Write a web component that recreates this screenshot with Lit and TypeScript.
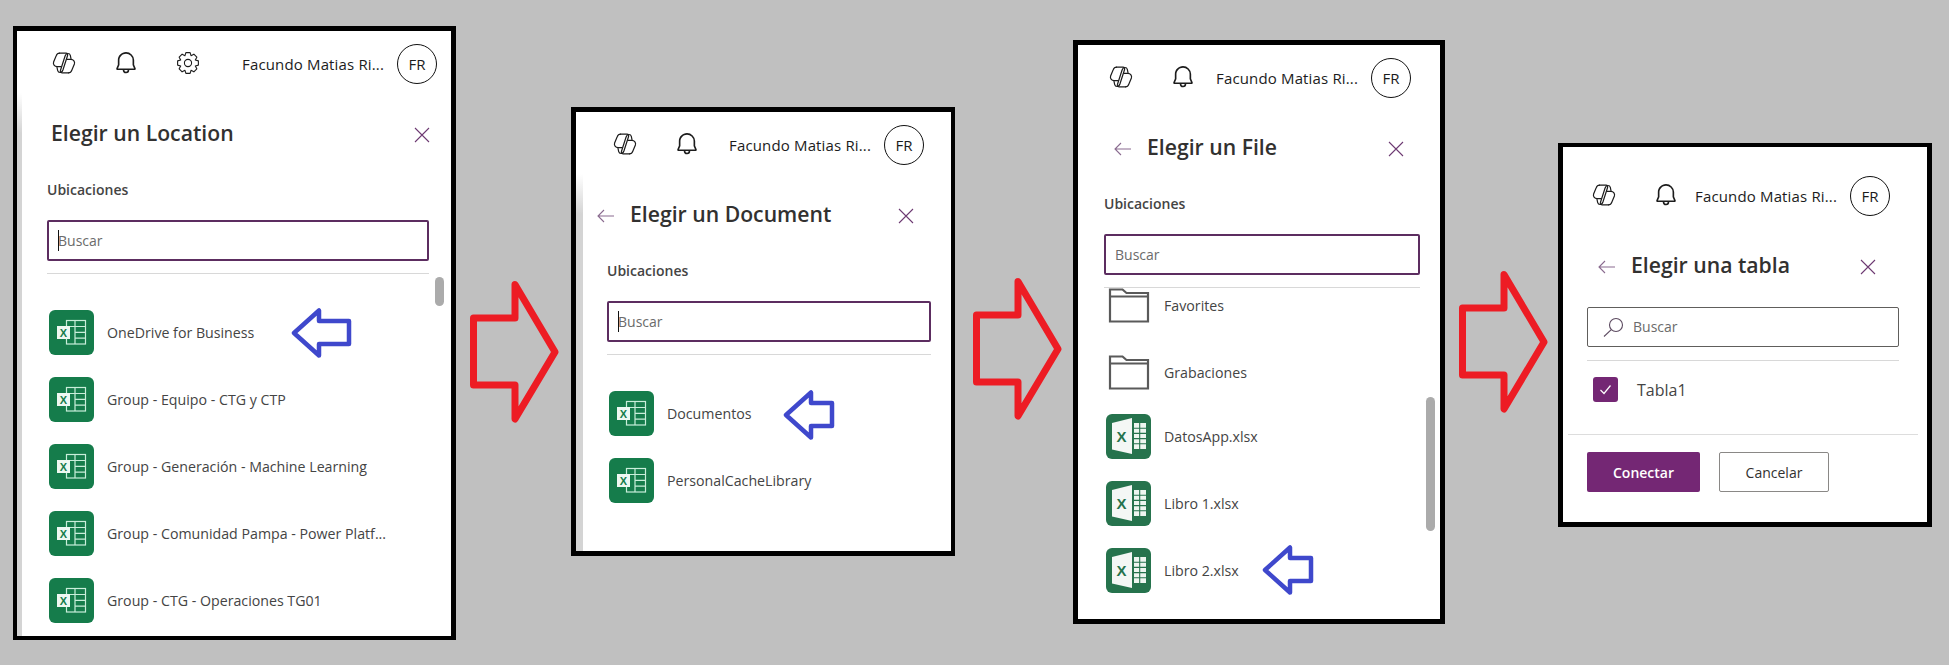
import { LitElement, css, html, svg } from 'lit';
import { customElement } from 'lit/decorators.js';

type RowKind = 'site' | 'folder' | 'book';

interface Row {
  label: string;
  kind: RowKind;
  // left offset of the blue marker arrow, measured from the row start
  mark?: number;
  markTop?: number;
}

const NAME = 'Facundo Matias Ri...';

const siteIcon = html`<svg class="file" width="45" height="45" viewBox="0 0 45 45">
  <rect width="45" height="45" rx="6" fill="#157c4b" />
  <g fill="none" stroke="#c9eeda" stroke-width="1.2">
    <rect x="17.5" y="10.5" width="19" height="23.5" />
    <path d="M26 10.5V34M17.5 16.5h19M26 22.3h10.5M26 28.2h10.5" />
  </g>
  <rect x="8" y="16" width="13" height="13" fill="#eef8f2" />
  <text x="14.5" y="26.5" class="x-a" text-anchor="middle">X</text>
</svg>`;

const bookIcon = html`<svg class="file" width="45" height="45" viewBox="0 0 45 45">
  <rect width="45" height="45" rx="6" fill="#26734d" />
  <path d="M6 9 26 4V40L6 35.500Z" fill="#f4f7f5" />
  <text x="15.500" y="28" class="x-b" text-anchor="middle">X</text>
  <rect x="28" y="9" width="12" height="26" fill="#eef5f0" />
  <path d="M33.700 9V35M28 14.200h12M28 19.400h12M28 24.600h12M28 29.800h12" stroke="#26734d" stroke-width="1.1" fill="none" />
</svg>`;

const folderIcon = html`<svg class="file" width="45" height="45" viewBox="0 0 45 45">
  <path d="M4 6.500H16.500L20.500 10H42V38.500H4Z M4 13.500H42" fill="none" stroke="#5a5a5a" stroke-width="2.200" />
</svg>`;

const icons = { site: siteIcon, folder: folderIcon, book: bookIcon };

const copilot = svg`<g fill="none" stroke="#1c1c1c" stroke-width="1.200" stroke-linejoin="round" stroke-linecap="round">
  <path d="M7.500 2.200H14c1.500 0 2 1.100 1.500 2.500L11 18.700c-.6 1.700-1.400 2.800-3 2.800-1.200 0-2-.7-2.300-1.900L5 16.300" />
  <path d="M7.500 2.200C5.800 2.200 4.800 3.100 4.200 4.800L1.600 11c-.7 2.200.8 4.700 3.500 4.700H9" />
  <path d="M16.500 21.800H10c-1.500 0-2-1.100-1.500-2.500L13 5.300c.6-1.700 1.400-2.800 3-2.800 1.200 0 2 .7 2.300 1.900l.7 3.300" />
  <path d="M16.500 21.800c1.700 0 2.700-.9 3.300-2.600L22.400 13c.7-2.200-.8-4.700-3.500-4.700H15" />
</g>`;

const bell = svg`<path fill="#1c1c1c" d="M12 1.996a7.49 7.49 0 0 1 7.496 7.25l.004.25v4.097l1.38 3.156a1.25 1.25 0 0 1-1.145 1.75L15 18.502a3 3 0 0 1-5.995.177L9 18.499H4.275a1.251 1.251 0 0 1-1.147-1.747L4.5 13.594V9.496c0-4.155 3.352-7.5 7.5-7.5ZM13.500 18.500l-3 .002a1.500 1.500 0 0 0 2.993.145l.007-.147ZM12 3.496c-3.320 0-6 2.674-6 6v4.410L4.656 17h14.697L18 13.907V9.509l-.004-.225A5.988 5.988 0 0 0 12 3.496Z" />`;

// eight-toothed gear outline, as in the reference
const gearPath = () => {
  const pts: string[] = [];
  for (let i = 0; i < 8; i++) {
    const a = (i * Math.PI) / 4;
    for (const [da, r] of [
      [-0.2, 10.6],
      [0.2, 10.6],
      [Math.PI / 8, 7.9],
    ]) {
      pts.push(`${(12 + r * Math.sin(a + da)).toFixed(2)} ${(12 - r * Math.cos(a + da)).toFixed(2)}`);
    }
  }
  return `M${pts.join('L')}Z`;
};

const gear = svg`<g fill="none" stroke="#1c1c1c" stroke-width="1.100" stroke-linejoin="round">
  <path d=${gearPath()} />
  <circle cx="12" cy="12" r="3.600" />
</g>`;

const closeIcon = html`<svg class="close" width="16" height="16" viewBox="0 0 16 16">
  <path d="M1 1 15 15M15 1 1 15" stroke="#6d3a72" stroke-width="1.100" fill="none" />
</svg>`;

const backIcon = html`<svg class="back" width="17" height="14" viewBox="0 0 17 14">
  <path d="M17 7H1M7 1 1 7 7 13" stroke="#8a6b8f" stroke-width="1.100" fill="none" />
</svg>`;

const redArrow = (cls: string) => html`<svg class="red ${cls}" width="89" height="142" viewBox="0 0 89 142">
  <path d="M3.500 37H45V3.500L85 71 45 138V104H3.500Z" fill="none" stroke="#ed1c24" stroke-width="7" stroke-linejoin="round" />
</svg>`;

const blueArrow = (left: number, top: number, wide: boolean) => {
  const tail = wide ? 58 : 49;
  return html`<svg class="blue" style="left:${left}px;top:${top}px" width="${tail + 3}" height="50" viewBox="0 0 ${tail + 3} 50">
    <path d="M3 25 28 2.500V13H${tail}V36H28V47.500Z" fill="none" stroke="#3f48cc" stroke-width="4.500" stroke-linejoin="round" />
  </svg>`;
};

@customElement('app-root')
export class AppRoot extends LitElement {
  static styles = css`
    :host {
      display: block;
      font-family: 'Open Sans', 'Noto Sans', sans-serif;
    }

    .page {
      display: flex;
      align-items: flex-start;
      height: 665px;
      padding-left: 13px;
      background: #c0c0c0;
      overflow: hidden;
    }

    .panel {
      position: relative;
      flex: none;
      display: flex;
      flex-direction: column;
      box-sizing: border-box;
      background: #fff;
      border: 5px solid #000;
      overflow: hidden;
    }

    .p1 {
      width: 443px;
      height: 614px;
      margin-top: 26px;
      border-width: 5px 5px 4px 4px;
      --head-left: 35px;
      --head-right: 14px;
      --head-top: 13px;
      --title-left: 34px;
      --title-right: 21px;
      --body-left: 30px;
      --body-right: 22px;
    }

    .p2 {
      width: 384px;
      height: 449px;
      margin-top: 107px;
      border-right-width: 4px;
      --head-left: 37px;
      --head-right: 27px;
      --head-top: 13px;
      --title-left: 21px;
      --title-right: 37px;
      --body-left: 31px;
      --body-right: 20px;
    }

    .p3 {
      width: 372px;
      height: 584px;
      margin-top: 40px;
      --head-left: 31px;
      --head-right: 29px;
      --head-top: 13px;
      --title-left: 36px;
      --title-right: 36px;
      --body-left: 26px;
      --body-right: 20px;
    }

    .p4 {
      width: 374px;
      height: 384px;
      margin-top: 143px;
      border-top-width: 4px;
      --head-left: 29px;
      --head-right: 37px;
      --head-top: 29px;
      --title-left: 35px;
      --title-right: 51px;
      --body-left: 24px;
      --body-right: 28px;
    }

    .red {
      flex: none;
    }

    .a1 {
      margin: 281px 12px 0 14px;
    }

    .a2 {
      margin: 278px 11px 0 18px;
    }

    .a3 {
      margin: 271px 10px 0 14px;
    }

    .strip {
      position: absolute;
      top: 62px;
      bottom: 0;
      left: 0;
      width: 5px;
      background: linear-gradient(to bottom, #fff, #d4d4d4 40px);
    }

    .p2 .strip {
      width: 7px;
    }

    .head {
      display: flex;
      align-items: center;
      justify-content: space-between;
      flex: none;
      height: 40px;
      margin-top: var(--head-top);
      padding: 0 var(--head-right) 0 var(--head-left);
    }

    .tools {
      display: flex;
      align-items: center;
      gap: 38px;
      margin-top: -2px;
    }

    .tools svg {
      flex: none;
      display: block;
    }

    .who {
      display: flex;
      align-items: center;
      gap: 13px;
    }

    .name {
      font-size: 15px;
      letter-spacing: 0.15px;
      color: #1c1c1c;
      white-space: nowrap;
    }

    .avatar {
      flex: none;
      box-sizing: border-box;
      display: flex;
      align-items: center;
      justify-content: center;
      width: 40px;
      height: 40px;
      border: 1px solid #111;
      border-radius: 50%;
      font-size: 15px;
      color: #1c1c1c;
    }

    .title-row {
      display: flex;
      align-items: center;
      flex: none;
      gap: 16px;
      height: 32px;
      margin-top: 34px;
      padding: 0 var(--title-right) 0 var(--title-left);
    }

    .title {
      margin: 0;
      padding-bottom: 3px;
      font-size: 21.2px;
      font-weight: 600;
      color: #323130;
      white-space: nowrap;
    }

    .close {
      margin-left: auto;
      margin-top: 1px;
      flex: none;
    }

    .back {
      flex: none;
      margin-top: 1px;
    }

    .body {
      display: flex;
      flex-direction: column;
      flex: none;
      padding: 0 var(--body-right) 0 var(--body-left);
    }

    .label {
      margin-top: 30px;
      height: 20px;
      line-height: 20px;
      font-size: 14px;
      font-weight: 600;
      color: #444;
    }

    .search {
      position: relative;
      display: flex;
      align-items: center;
      box-sizing: border-box;
      height: 41px;
      margin-top: 20px;
      padding: 0 0 1px 9px;
      border: 2px solid #5c2d60;
      border-radius: 2px;
      font-size: 14px;
      color: #6b6b6b;
    }

    .caret {
      position: absolute;
      left: 9px;
      top: 8px;
      width: 1px;
      height: 21px;
      background: #111;
    }

    .rule {
      height: 1px;
      margin-top: 12px;
      background: #d8d8d8;
    }

    .list {
      display: flex;
      flex-direction: column;
      gap: 22px;
      padding: 36px 0 0 2px;
    }

    .list.scrolled {
      padding-top: 0;
      margin-top: -5px;
    }

    .row {
      position: relative;
      display: flex;
      align-items: center;
      gap: 13px;
      height: 45px;
      font-size: 14.2px;
      color: #444;
      white-space: nowrap;
    }

    .row span {
      padding-bottom: 1px;
    }

    .folder + .book {
      margin-top: -3px;
    }

    .file {
      flex: none;
    }

    .x-a {
      font: 700 11px 'Liberation Sans', sans-serif;
      fill: #157c4b;
    }

    .x-b {
      font: 700 15px 'Liberation Sans', sans-serif;
      fill: #26734d;
    }

    .blue {
      position: absolute;
    }

    .thumb {
      position: absolute;
      width: 9px;
      border-radius: 5px;
      background: #ababab;
    }

    .p1 .thumb {
      left: 418px;
      top: 246px;
      height: 29px;
    }

    .p3 .thumb {
      left: 348px;
      top: 352px;
      height: 134px;
    }

    .p4 .search {
      height: 40px;
      margin-top: 25px;
      padding-left: 15px;
      gap: 9px;
      border: 1px solid #605e5c;
    }

    .p4 .rule {
      margin-top: 13px;
    }

    .check-row {
      display: flex;
      align-items: center;
      gap: 19px;
      margin: 16px 0 32px 6px;
      font-size: 16px;
      color: #444;
    }

    .check {
      display: flex;
      align-items: center;
      justify-content: center;
      width: 25px;
      height: 25px;
      border-radius: 3px;
      background: #742774;
    }

    .foot {
      display: flex;
      gap: 19px;
      margin: 0 9px 0 5px;
      padding: 17px 19px 0;
      border-top: 1px solid #ddd;
    }

    .btn {
      box-sizing: border-box;
      display: flex;
      align-items: center;
      justify-content: center;
      height: 40px;
      border-radius: 2px;
      font-size: 14px;
      font-weight: 600;
    }

    .primary {
      width: 113px;
      background: #742774;
      color: #fff;
    }

    .secondary {
      width: 110px;
      border: 1px solid #8a8886;
      background: #fff;
      color: #323130;
      font-weight: 500;
    }
  `;

  private renderHead(gearToo = false) {
    return html`<div class="head">
      <div class="tools">
        <svg width="24" height="24" viewBox="0 0 24 24">${copilot}</svg>
        <svg width="24" height="24" viewBox="1 1 22 22">${bell}</svg>
        ${gearToo ? html`<svg width="24" height="24" viewBox="0 0 24 24">${gear}</svg>` : ''}
      </div>
      <div class="who">
        <span class="name">${NAME}</span>
        <div class="avatar">FR</div>
      </div>
    </div>`;
  }

  private renderTitle(title: string, hasBack = true) {
    return html`<div class="title-row">
      ${hasBack ? backIcon : ''}
      <h2 class="title">${title}</h2>
      ${closeIcon}
    </div>`;
  }

  private renderSearch(caret: boolean) {
    return html`<div class="label">Ubicaciones</div>
      <div class="search">${caret ? html`<span class="caret"></span>` : ''}Buscar</div>
      <div class="rule"></div>`;
  }

  private renderRows(rows: Row[], scrolled = false, wideMark = false) {
    return html`<div class="list ${scrolled ? 'scrolled' : ''}">
      ${rows.map(
        (r) => html`<div class="row ${r.kind}">
          ${icons[r.kind]}<span>${r.label}</span>
          ${r.mark !== undefined ? blueArrow(r.mark, r.markTop ?? 0, wideMark) : ''}
        </div>`,
      )}
    </div>`;
  }

  render() {
    const locations: Row[] = [
      { label: 'OneDrive for Business', kind: 'site', mark: 242, markTop: -2 },
      { label: 'Group - Equipo - CTG y CTP', kind: 'site' },
      { label: 'Group - Generación - Machine Learning', kind: 'site' },
      { label: 'Group - Comunidad Pampa - Power Platf...', kind: 'site' },
      { label: 'Group - CTG - Operaciones TG01', kind: 'site' },
    ];
    const documents: Row[] = [
      { label: 'Documentos', kind: 'site', mark: 174, markTop: -1 },
      { label: 'PersonalCacheLibrary', kind: 'site' },
    ];
    const files: Row[] = [
      { label: 'Favorites', kind: 'folder' },
      { label: 'Grabaciones', kind: 'folder' },
      { label: 'DatosApp.xlsx', kind: 'book' },
      { label: 'Libro 1.xlsx', kind: 'book' },
      { label: 'Libro 2.xlsx', kind: 'book', mark: 156, markTop: -3 },
    ];

    return html`<div class="page">
      <section class="panel p1">
        <div class="strip"></div>
        ${this.renderHead(true)} ${this.renderTitle('Elegir un Location', false)}
        <div class="body">${this.renderSearch(true)}</div>
        <div class="body">${this.renderRows(locations, false, true)}</div>
        <div class="thumb"></div>
      </section>
      ${redArrow('a1')}
      <section class="panel p2">
        <div class="strip"></div>
        ${this.renderHead()} ${this.renderTitle('Elegir un Document')}
        <div class="body">${this.renderSearch(true)}</div>
        <div class="body">${this.renderRows(documents)}</div>
      </section>
      ${redArrow('a2')}
      <section class="panel p3">
        ${this.renderHead()} ${this.renderTitle('Elegir un File')}
        <div class="body">${this.renderSearch(false)}</div>
        <div class="body">${this.renderRows(files, true)}</div>
        <div class="thumb"></div>
      </section>
      ${redArrow('a3')}
      <section class="panel p4">
        ${this.renderHead()} ${this.renderTitle('Elegir una tabla')}
        <div class="body">
          <div class="search">
            <svg width="21" height="20" viewBox="0 0 21 20">
              <circle cx="13" cy="8" r="6.500" fill="none" stroke="#5c4a60" stroke-width="1.100" />
              <path d="M8.300 12.700 1 19.500" stroke="#5c4a60" stroke-width="1.100" fill="none" />
            </svg>
            Buscar
          </div>
          <div class="rule"></div>
          <div class="check-row">
            <span class="check">
              <svg width="13" height="11" viewBox="0 0 13 11">
                <path d="M1.500 6 5 9.500 11.500 1.500" stroke="#fff" stroke-width="1.200" fill="none" />
              </svg>
            </span>
            Tabla1
          </div>
        </div>
        <div class="foot">
          <div class="btn primary">Conectar</div>
          <div class="btn secondary">Cancelar</div>
        </div>
      </section>
    </div>`;
  }
}

declare global {
  interface HTMLElementTagNameMap {
    'app-root': AppRoot;
  }
}
